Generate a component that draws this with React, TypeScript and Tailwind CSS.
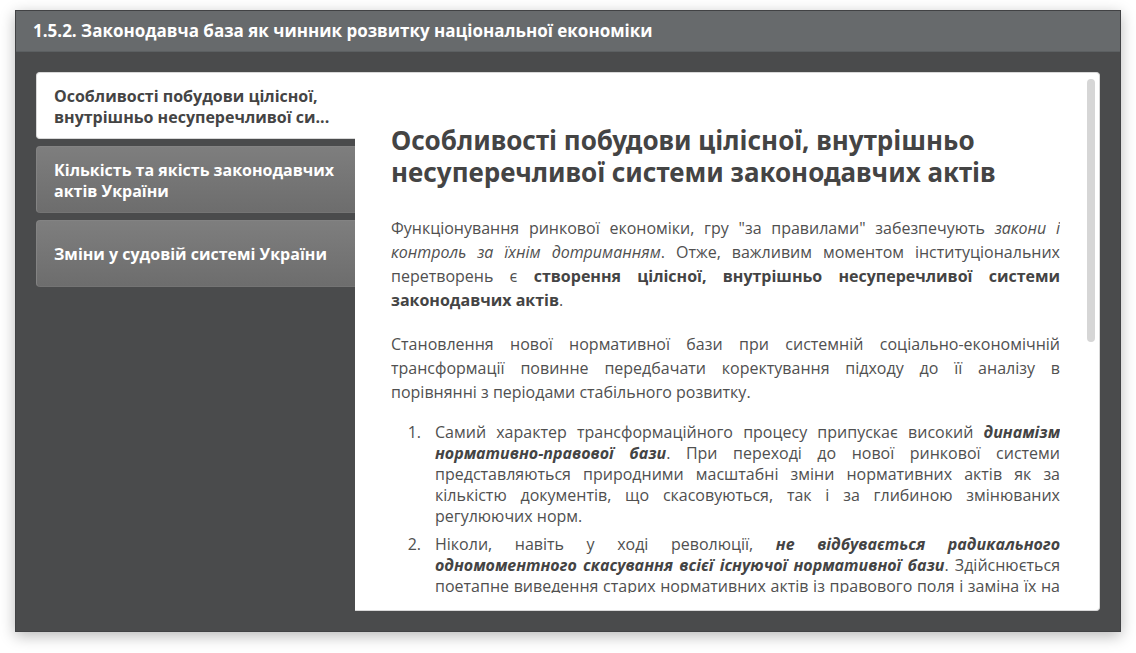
import { useState } from "react";

const tabs = [
  "Особливості побудови цілісної, внутрішньо несуперечливої си...",
  "Кількість та якість законодавчих актів України",
  "Зміни у судовій системі України",
];

function TabList({ active, onSelect }: { active: number; onSelect: (index: number) => void }) {
  return (
    <nav className="flex w-[30%] max-w-[319px] shrink-0 flex-col gap-[7px]">
      {tabs.map((label, index) => (
        <button
          key={label}
          type="button"
          aria-pressed={index === active}
          onClick={() => onSelect(index)}
          className={
            index === active
              ? "flex h-[67px] items-center rounded-l border border-r-0 border-[#d8d8d8] bg-white pt-[2px] pr-4 pl-[17px] text-left text-[#444444]"
              : "flex h-[67px] items-center rounded-l border border-r-0 border-[#838383] border-b-[#747474] bg-linear-to-b from-[#7e7e7e] to-[#6d6d6d] pt-[2px] pr-4 pl-[17px] text-left text-white"
          }
        >
          <span className="text-base leading-[21px] font-bold">{label}</span>
        </button>
      ))}
    </nav>
  );
}

function Article() {
  return (
    <article className="text-justify text-base leading-6 text-[#505050]">
      <h2 className="text-left font-['Noto_Sans',sans-serif] text-[26px] leading-8 font-bold text-[#444444]">
        Особливості побудови цілісної, внутрішньо несуперечливої системи законодавчих актів
      </h2>
      <p className="mt-7">
        Функціонування ринкової економіки, гру "за правилами" забезпечують{" "}
        <em>закони і контроль за їхнім дотриманням</em>. Отже, важливим моментом інституціональних
        перетворень є{" "}
        <strong className="text-[#444444]">
          створення цілісної, внутрішньо несуперечливої системи законодавчих актів
        </strong>
        .
      </p>
      <p className="mt-5">
        <span className="block [text-align-last:justify]">
          Становлення нової нормативної бази при системній соціально-економічній трансформації
          повинне передбачати коректування підходу до її аналізу в
        </span>{" "}
        порівнянні з періодами стабільного розвитку.
      </p>
      <ol className="mt-[18px] flex list-none flex-col gap-[7px] leading-[21px]">
        <li className="flex">
          <span className="w-11 shrink-0 pr-[14px] text-right">1.</span>
          <p className="min-w-0 flex-1">
            Самий характер трансформаційного процесу припускає високий{" "}
            <strong className="text-[#444444] italic">динамізм нормативно-правової бази</strong>. При
            переході до нової ринкової системи представляються природними масштабні зміни нормативних
            актів як за кількістю документів, що скасовуються, так і за глибиною змінюваних
            регулюючих норм.
          </p>
        </li>
        <li className="flex">
          <span className="w-11 shrink-0 pr-[14px] text-right">2.</span>
          <p className="min-w-0 flex-1 [text-align-last:justify]">
            Ніколи, навіть у ході революції,{" "}
            <strong className="text-[#444444] italic">
              не відбувається радикального одномоментного скасування всієї існуючої нормативної бази
            </strong>
            . Здійснюється поетапне виведення старих нормативних актів із правового поля і заміна їх
            на
          </p>
        </li>
      </ol>
    </article>
  );
}

export default function App() {
  const [active, setActive] = useState(0);

  return (
    <div className="flex h-screen flex-col bg-white px-[15px] pt-[10px] pb-[21px] font-['Open_Sans','Noto_Sans',sans-serif]">
      <main className="flex min-h-0 flex-1 flex-col border border-[#414244] bg-[#4a4b4c] shadow-[0_4px_14px_rgba(0,0,0,0.28)]">
        <header className="flex h-[41px] shrink-0 items-center border-b border-[#5c6062] bg-[#676a6c] px-[17px]">
          <h1 className="truncate text-[17px] leading-6 font-bold text-white">
            1.5.2. Законодавча база як чинник розвитку національної економіки
          </h1>
        </header>
        <div className="flex min-h-0 flex-1 p-5">
          <TabList active={active} onSelect={setActive} />
          <section className="relative min-w-0 flex-1 rounded-r border border-l-0 border-[#d8d8d8] bg-white pt-[51px] pr-[39px] pb-[17px] pl-9">
            <div className="h-full overflow-y-auto [scrollbar-width:none]">
              <Article />
            </div>
            <div className="absolute top-[6px] right-[4px] h-[49%] w-2 rounded-full bg-[#d6d6d6]" />
          </section>
        </div>
      </main>
    </div>
  );
}
